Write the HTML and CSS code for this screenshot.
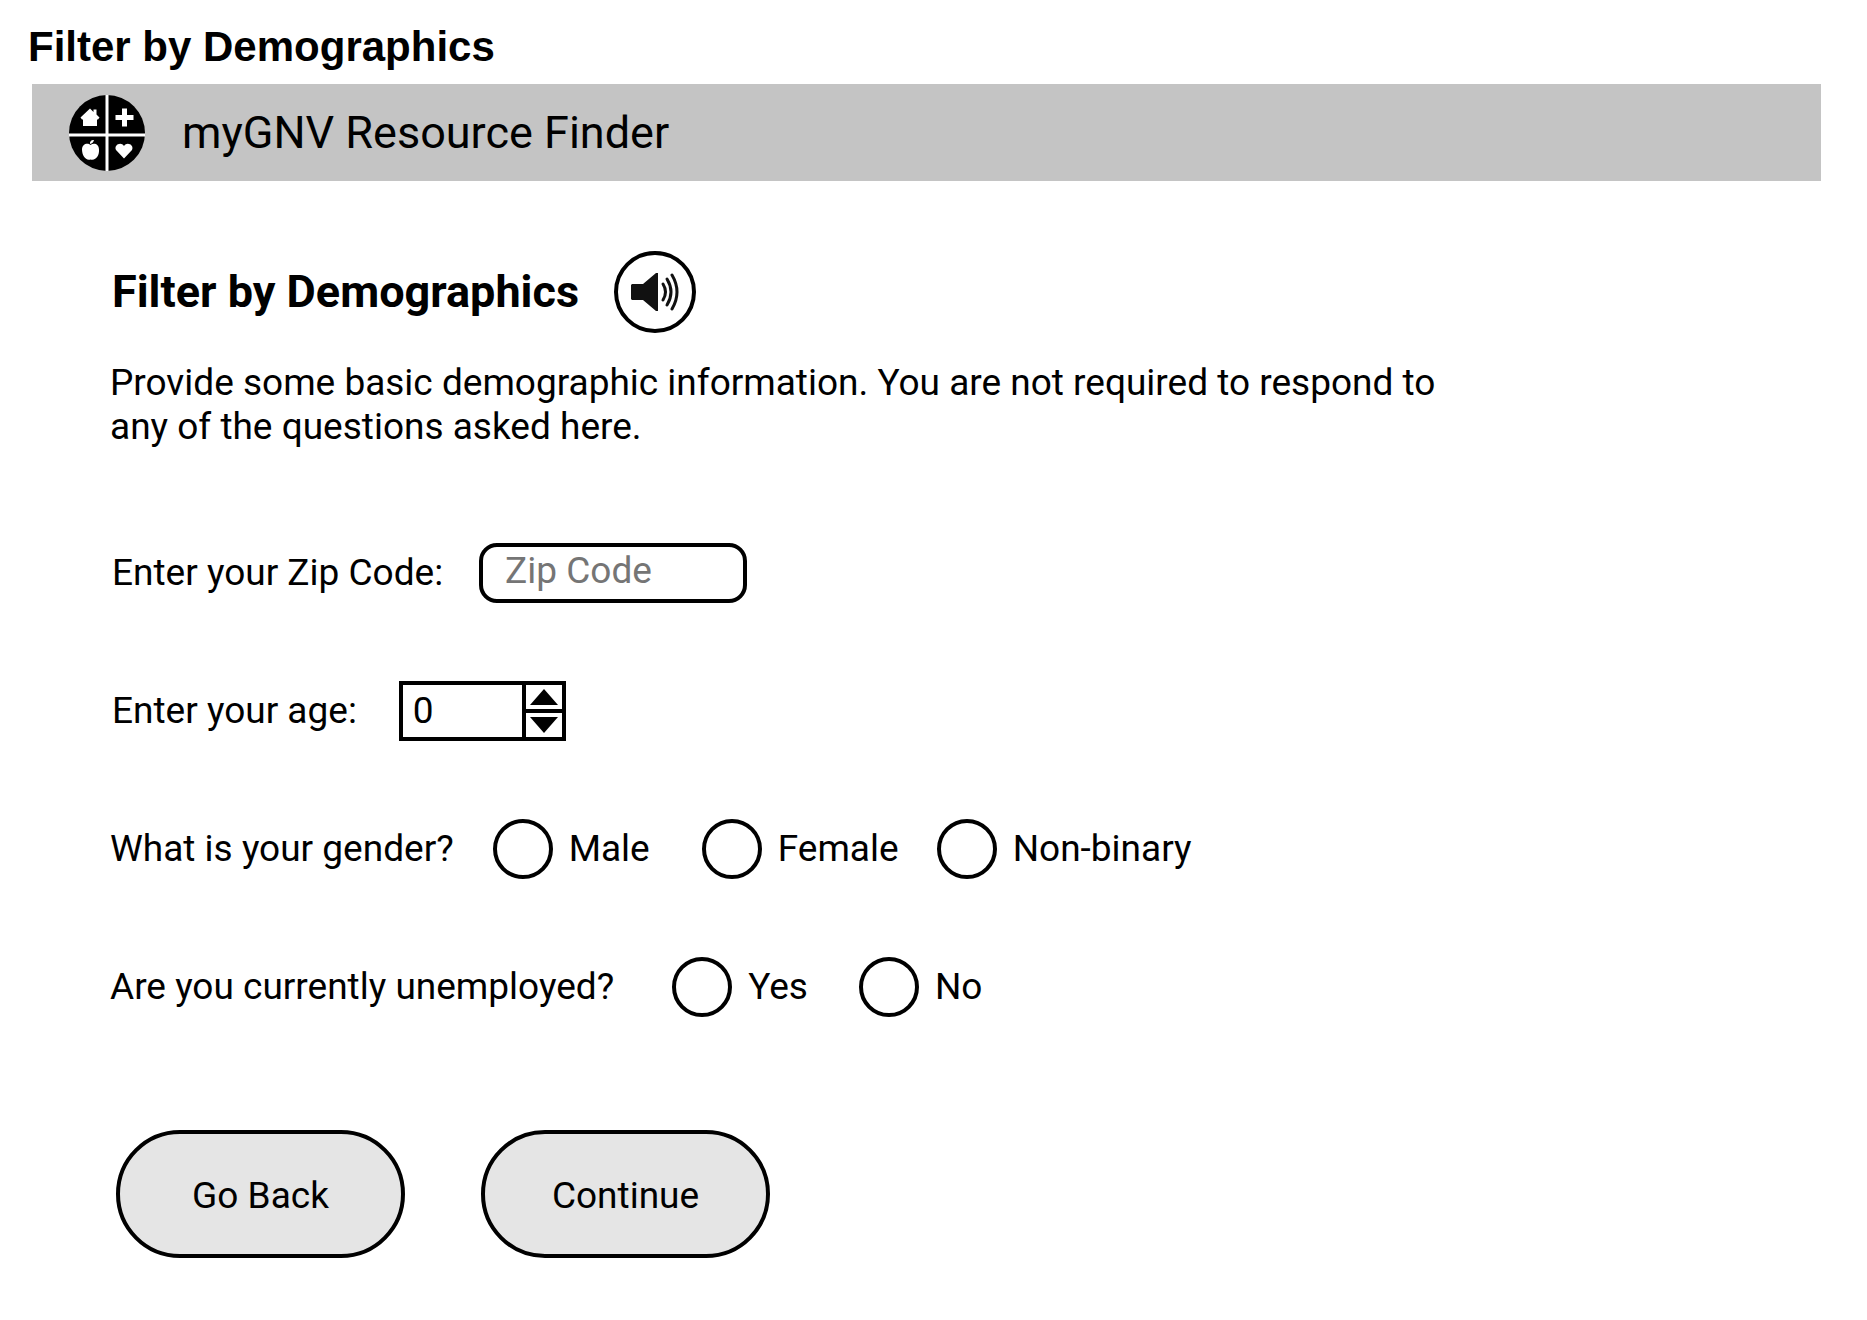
FILE: index.html
```html
<!DOCTYPE html>
<html lang="en">
<head>
<meta charset="utf-8">
<meta name="viewport" content="width=device-width, initial-scale=1">
<title>Filter by Demographics</title>
<link rel="stylesheet" href="styles.css">
</head>
<body>
<h1 class="page-title">Filter by Demographics</h1>
<header class="site-header">
  <svg class="logo" viewBox="0 0 78 78" aria-hidden="true">
    <circle cx="39" cy="39" r="38" fill="#000"/>
    <path d="M39 1V77M1 41H77" stroke="#fff" stroke-width="3" fill="none"/>
    <path d="M22 14.500L25.500 18V15.500H28.500V20.500L31.500 23.500L30 25.500H29V32H15V25.500H14L12.500 23.500Z" fill="#fff"/>
    <path d="M54 14.500H59V21H65.500V26H59V32.500H54V26H47.500V21H54Z" fill="#fff"/>
    <path d="M22.500 51C20 48.500 14 49.500 14 55.500C14 61 17.500 67 22.500 65.500C28 67 31.500 61 31 55.500C31 49.500 25.500 48.500 22.500 51ZM22 50C21.500 47.500 23.500 45.500 26 46C25.500 48.500 24 49.500 22 50Z" fill="#fff"/>
    <path d="M56 64.500L48 56C45.500 51 53 47 56 52C59 47 66.500 51 64 56Z" fill="#fff"/>
  </svg>
  <span class="site-name">myGNV Resource Finder</span>
</header>
<main class="content">
  <div class="heading">
    <h2 class="heading-text">Filter by Demographics</h2>
    <button class="listen" type="button" aria-label="Read aloud">
      <svg class="listen-icon" viewBox="0 0 50 40" aria-hidden="true">
        <path d="M2 12H13L26 1H28V39H26L13 28H2L1 27V13Z" fill="#111"/>
        <g fill="none" stroke="#111" stroke-width="3" stroke-linecap="round">
          <path d="M33 12Q38 20 33 28"/>
          <path d="M37 7Q45 20 37 33"/>
          <path d="M42 3Q52 20 42 37"/>
        </g>
      </svg>
    </button>
  </div>
  <p class="intro">Provide some basic demographic information. You are not required to respond to any of the questions asked here.</p>
  <form class="form">
    <div class="field field-zip">
      <label for="zip">Enter your Zip Code:</label>
      <input class="zip" id="zip" type="text" placeholder="Zip Code">
    </div>
    <div class="field field-age">
      <label for="age">Enter your age:</label>
      <div class="stepper">
        <input class="age" id="age" type="number" value="0" min="0">
        <div class="steps">
          <button class="step" type="button" aria-label="Increase age"><svg class="arrow" viewBox="0 0 28 16" aria-hidden="true"><path d="M14 0L28 16H0Z"/></svg></button>
          <button class="step" type="button" aria-label="Decrease age"><svg class="arrow" viewBox="0 0 28 16" aria-hidden="true"><path d="M14 16L0 0H28Z"/></svg></button>
        </div>
      </div>
    </div>
    <div class="field field-gender" role="radiogroup" aria-labelledby="gender-label">
      <span id="gender-label">What is your gender?</span>
      <div class="options-gender">
        <label class="option"><input class="radio" type="radio" name="gender">Male</label>
        <label class="option"><input class="radio" type="radio" name="gender">Female</label>
        <label class="option"><input class="radio" type="radio" name="gender">Non-binary</label>
      </div>
    </div>
    <div class="field field-work" role="radiogroup" aria-labelledby="work-label">
      <span id="work-label">Are you currently unemployed?</span>
      <div class="options">
        <label class="option"><input class="radio" type="radio" name="work">Yes</label>
        <label class="option"><input class="radio" type="radio" name="work">No</label>
      </div>
    </div>
    <div class="actions">
      <button class="action" type="button">Go Back</button>
      <button class="action" type="button">Continue</button>
    </div>
  </form>
</main>
</body>
</html>
```
FILE: styles.css
```css
* {
  box-sizing: border-box;
}

body {
  margin: 0;
  padding: 21px 46px 63px 32px;
  background: #fff;
  color: #000;
  font-family: Roboto, sans-serif;
  font-size: 37px;
  line-height: 44px;
}

button,
input {
  margin: 0;
  color: inherit;
  font: inherit;
}

.page-title {
  margin: 0 -4px 11px;
  font: bold 42px/52px "Liberation Sans", Arial, sans-serif;
}

.site-header {
  display: flex;
  align-items: center;
  gap: 36px;
  min-height: 97px;
  padding: 0 36px;
  background: #c4c4c4;
}

.logo {
  flex: none;
  width: 78px;
  height: 78px;
}

.site-name {
  font-size: 45px;
  line-height: 54px;
}

.content {
  padding: 70px 78px 0;
}

.heading {
  display: flex;
  align-items: center;
  gap: 35px;
  padding-left: 2px;
}

.heading-text {
  margin: 0;
  font-size: 45px;
  font-weight: 700;
  line-height: 54px;
}

.listen {
  display: flex;
  align-items: center;
  justify-content: center;
  width: 82px;
  height: 82px;
  padding: 0;
  border: 4px solid #000;
  border-radius: 50%;
  background: #fff;
}

.listen-icon {
  flex: none;
  width: 50px;
  height: 40px;
}

.intro {
  max-width: 1360px;
  margin: 28px 0 94px;
}

.form {
  display: flex;
  flex-direction: column;
  gap: 78px;
}

.field {
  display: flex;
  align-items: center;
  min-height: 60px;
}

.field-zip {
  gap: 36px;
  padding-left: 2px;
}

.field-age {
  gap: 42px;
  padding-left: 2px;
}

.field-gender {
  gap: 39px;
}

.field-work {
  gap: 58px;
}

.zip {
  width: 268px;
  height: 60px;
  padding: 0 22px 6px;
  border: 4px solid #000;
  border-radius: 18px;
  background: #fff;
}

.zip::placeholder {
  color: #757575;
  opacity: 1;
}

.stepper {
  display: flex;
  width: 167px;
  height: 60px;
  border: 4px solid #000;
}

.age {
  flex: 1;
  min-width: 0;
  padding: 0 10px;
  border: 0;
  background: #fff;
  appearance: textfield;
}

.age::-webkit-inner-spin-button {
  appearance: none;
  margin: 0;
}

.steps {
  display: grid;
  grid-template-rows: 1fr 1fr;
  gap: 4px;
  width: 40px;
  padding-left: 4px;
  background: #000;
}

.step {
  display: flex;
  align-items: center;
  justify-content: center;
  min-height: 0;
  padding: 0;
  border: 0;
  background: #fff;
}

.arrow {
  width: 28px;
  height: 16px;
}

.options {
  display: flex;
  gap: 51px;
}

.options-gender {
  display: grid;
  grid-template-columns: 209px 235px auto;
}

.option {
  display: flex;
  align-items: center;
  gap: 16px;
}

.radio {
  flex: none;
  width: 60px;
  height: 60px;
  border: 4px solid #000;
  border-radius: 50%;
  background: #fff;
  appearance: none;
}

.radio:checked {
  background: #000;
  box-shadow: inset 0 0 0 10px #fff;
}

.actions {
  display: flex;
  gap: 76px;
  margin: 35px 0 0 6px;
}

.action {
  width: 289px;
  height: 128px;
  padding: 4px 0 0;
  border: 4px solid #000;
  border-radius: 64px;
  background: #e5e5e5;
}
```
